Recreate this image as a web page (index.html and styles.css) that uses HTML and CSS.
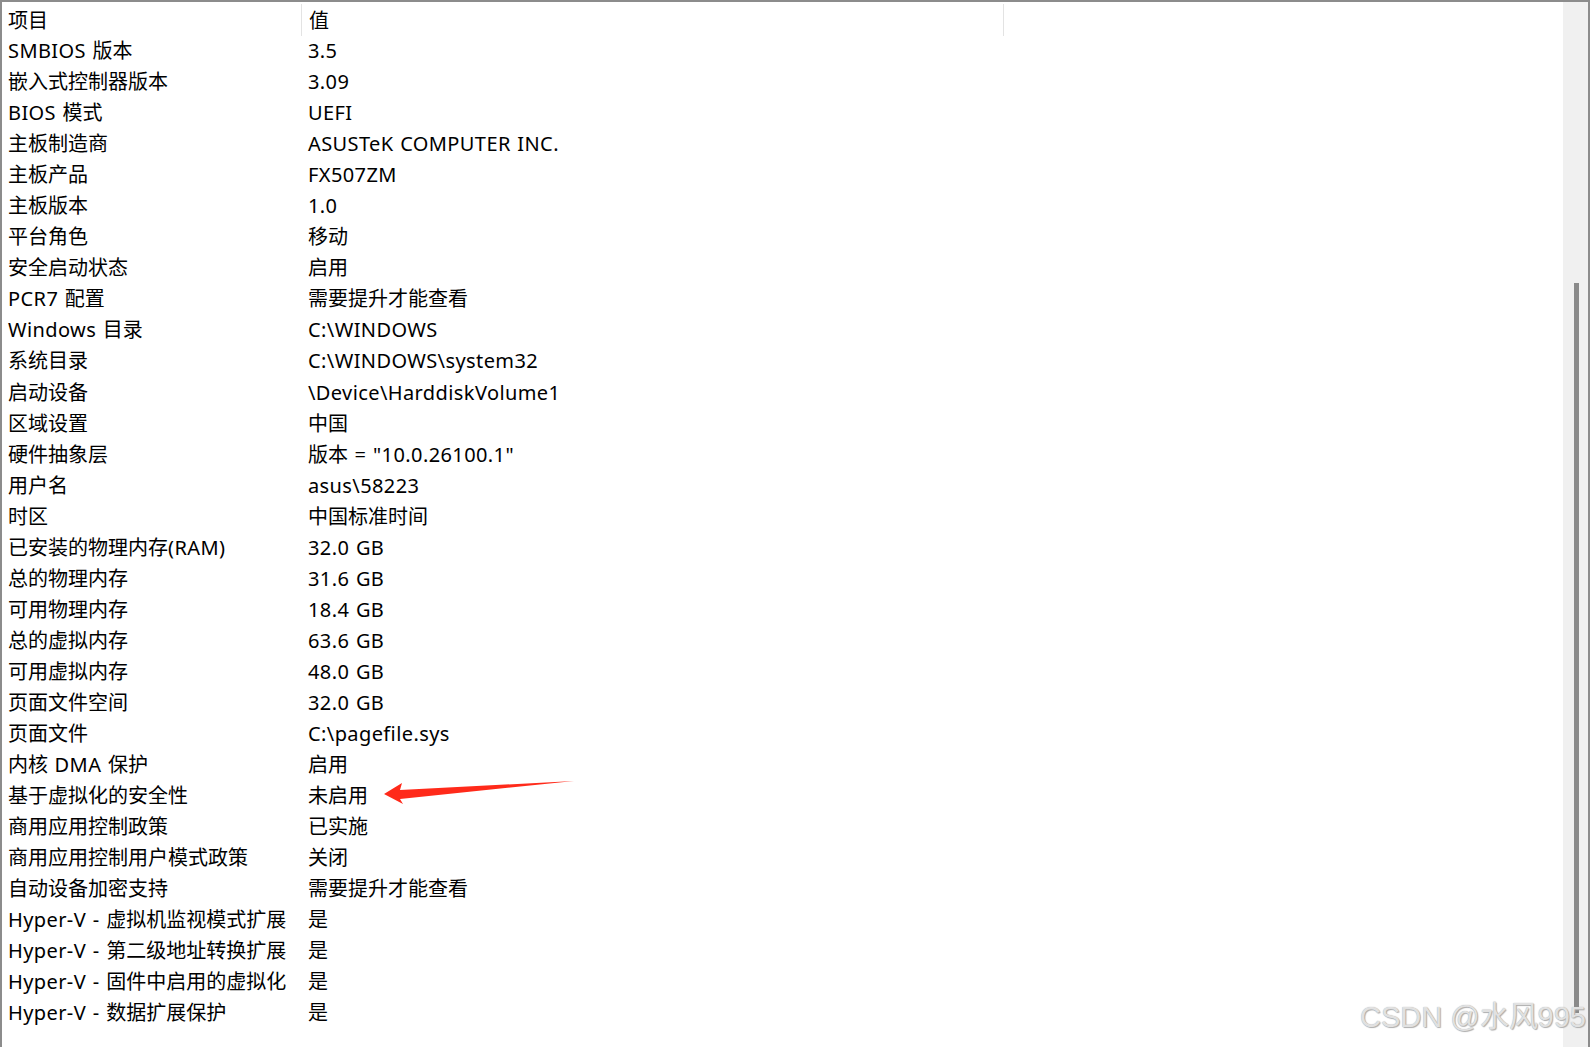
FILE: index.html
```html
<!DOCTYPE html>
<html lang="zh-CN">
<head>
  <meta charset="UTF-8">
  <title>系统摘要</title>
  <link rel="stylesheet" href="styles.css">
</head>
<body>
  <div class="frame">
    <div class="list">
      <div class="row head">
        <div class="cell name">项目</div>
        <div class="cell value">值</div>
        <div class="cell rest"></div>
      </div>
      <div class="row"><div class="cell name"><span class="lat">SMBIOS </span>版本</div><div class="cell value lat">3.5</div></div>
      <div class="row"><div class="cell name">嵌入式控制器版本</div><div class="cell value lat">3.09</div></div>
      <div class="row"><div class="cell name"><span class="lat">BIOS </span>模式</div><div class="cell value lat">UEFI</div></div>
      <div class="row"><div class="cell name">主板制造商</div><div class="cell value lat">ASUSTeK COMPUTER INC.</div></div>
      <div class="row"><div class="cell name">主板产品</div><div class="cell value lat">FX507ZM</div></div>
      <div class="row"><div class="cell name">主板版本</div><div class="cell value lat">1.0</div></div>
      <div class="row"><div class="cell name">平台角色</div><div class="cell value">移动</div></div>
      <div class="row"><div class="cell name">安全启动状态</div><div class="cell value">启用</div></div>
      <div class="row"><div class="cell name"><span class="lat">PCR7 </span>配置</div><div class="cell value">需要提升才能查看</div></div>
      <div class="row"><div class="cell name"><span class="lat">Windows </span>目录</div><div class="cell value lat">C:\WINDOWS</div></div>
      <div class="row"><div class="cell name">系统目录</div><div class="cell value lat">C:\WINDOWS\system32</div></div>
      <div class="row"><div class="cell name">启动设备</div><div class="cell value lat">\Device\HarddiskVolume1</div></div>
      <div class="row"><div class="cell name">区域设置</div><div class="cell value">中国</div></div>
      <div class="row"><div class="cell name">硬件抽象层</div><div class="cell value">版本<span class="lat"> = "10.0.26100.1"</span></div></div>
      <div class="row"><div class="cell name">用户名</div><div class="cell value lat">asus\58223</div></div>
      <div class="row"><div class="cell name">时区</div><div class="cell value">中国标准时间</div></div>
      <div class="row"><div class="cell name">已安装的物理内存<span class="lat">(RAM)</span></div><div class="cell value lat">32.0 GB</div></div>
      <div class="row"><div class="cell name">总的物理内存</div><div class="cell value lat">31.6 GB</div></div>
      <div class="row"><div class="cell name">可用物理内存</div><div class="cell value lat">18.4 GB</div></div>
      <div class="row"><div class="cell name">总的虚拟内存</div><div class="cell value lat">63.6 GB</div></div>
      <div class="row"><div class="cell name">可用虚拟内存</div><div class="cell value lat">48.0 GB</div></div>
      <div class="row"><div class="cell name">页面文件空间</div><div class="cell value lat">32.0 GB</div></div>
      <div class="row"><div class="cell name">页面文件</div><div class="cell value lat">C:\pagefile.sys</div></div>
      <div class="row"><div class="cell name">内核<span class="lat"> DMA </span>保护</div><div class="cell value">启用</div></div>
      <div class="row"><div class="cell name">基于虚拟化的安全性</div><div class="cell value marked">未启用
        <svg class="arrow" width="200" height="30" viewBox="0 0 200 30">
          <polygon points="0,15 18,4 16,11 190,2 16,20 19,25" fill="#ff2a1a"/>
        </svg>
      </div></div>
      <div class="row"><div class="cell name">商用应用控制政策</div><div class="cell value">已实施</div></div>
      <div class="row"><div class="cell name">商用应用控制用户模式政策</div><div class="cell value">关闭</div></div>
      <div class="row"><div class="cell name">自动设备加密支持</div><div class="cell value">需要提升才能查看</div></div>
      <div class="row"><div class="cell name"><span class="lat">Hyper-V - </span>虚拟机监视模式扩展</div><div class="cell value">是</div></div>
      <div class="row"><div class="cell name"><span class="lat">Hyper-V - </span>第二级地址转换扩展</div><div class="cell value">是</div></div>
      <div class="row"><div class="cell name"><span class="lat">Hyper-V - </span>固件中启用的虚拟化</div><div class="cell value">是</div></div>
      <div class="row"><div class="cell name"><span class="lat">Hyper-V - </span>数据扩展保护</div><div class="cell value">是</div></div>
    </div>
    <div class="scrollbar"><div class="thumb"></div></div>
    <div class="watermark">CSDN @水风995</div>
  </div>
</body>
</html>
```

FILE: styles.css
```css
body {
  margin: 0;
  background: #fff;
  font-family: "Noto Sans", "Noto Sans CJK SC", sans-serif;
  color: #000;
  overflow: hidden;
}
.frame {
  position: relative;
  display: flex;
  height: 1046px;
  border-top: 2px solid #8c8c8c;
  border-left: 2px solid #8c8c8c;
  border-right: 2px solid #8c8c8c;
  overflow: hidden;
}
.list {
  flex: 1;
  padding-top: 3px;
}
.row {
  display: flex;
  height: 31.06px;
  align-items: center;
  font-size: 20px;
  line-height: 31px;
  white-space: nowrap;
}
.lat {
  letter-spacing: 0.4px;
  word-spacing: 1px;
}
.cell.name {
  width: 293px;
  padding-left: 6px;
  flex: none;
}
.cell.value {
  padding-left: 7px;
  position: relative;
}
.row.head {
  height: 30px;
}
.row.head .cell {
  height: 32px;
  margin-top: -1px;
  line-height: 33px;
  border-right: 1px solid #e3e3e3;
}
.row.head .cell.value {
  width: 694px;
  flex: none;
}
.row.head .cell.rest {
  border-right: none;
}
.arrow {
  position: absolute;
  left: 83px;
  top: -1px;
}
.scrollbar {
  width: 25px;
  flex: none;
  background: #f0f0f0;
  display: flex;
  justify-content: center;
}
.thumb {
  width: 5px;
  height: 730px;
  margin-top: 281px;
  margin-left: 1px;
  background: #8a8a8a;
}
.watermark {
  position: absolute;
  right: 2px;
  bottom: 13px;
  font-family: "Liberation Sans", Arial, sans-serif;
  font-size: 29px;
  color: rgba(235, 235, 235, 0.9);
  text-shadow: 0 0 1px #9a9a9a, 1px 1px 1px #b0b0b0;
}
```
